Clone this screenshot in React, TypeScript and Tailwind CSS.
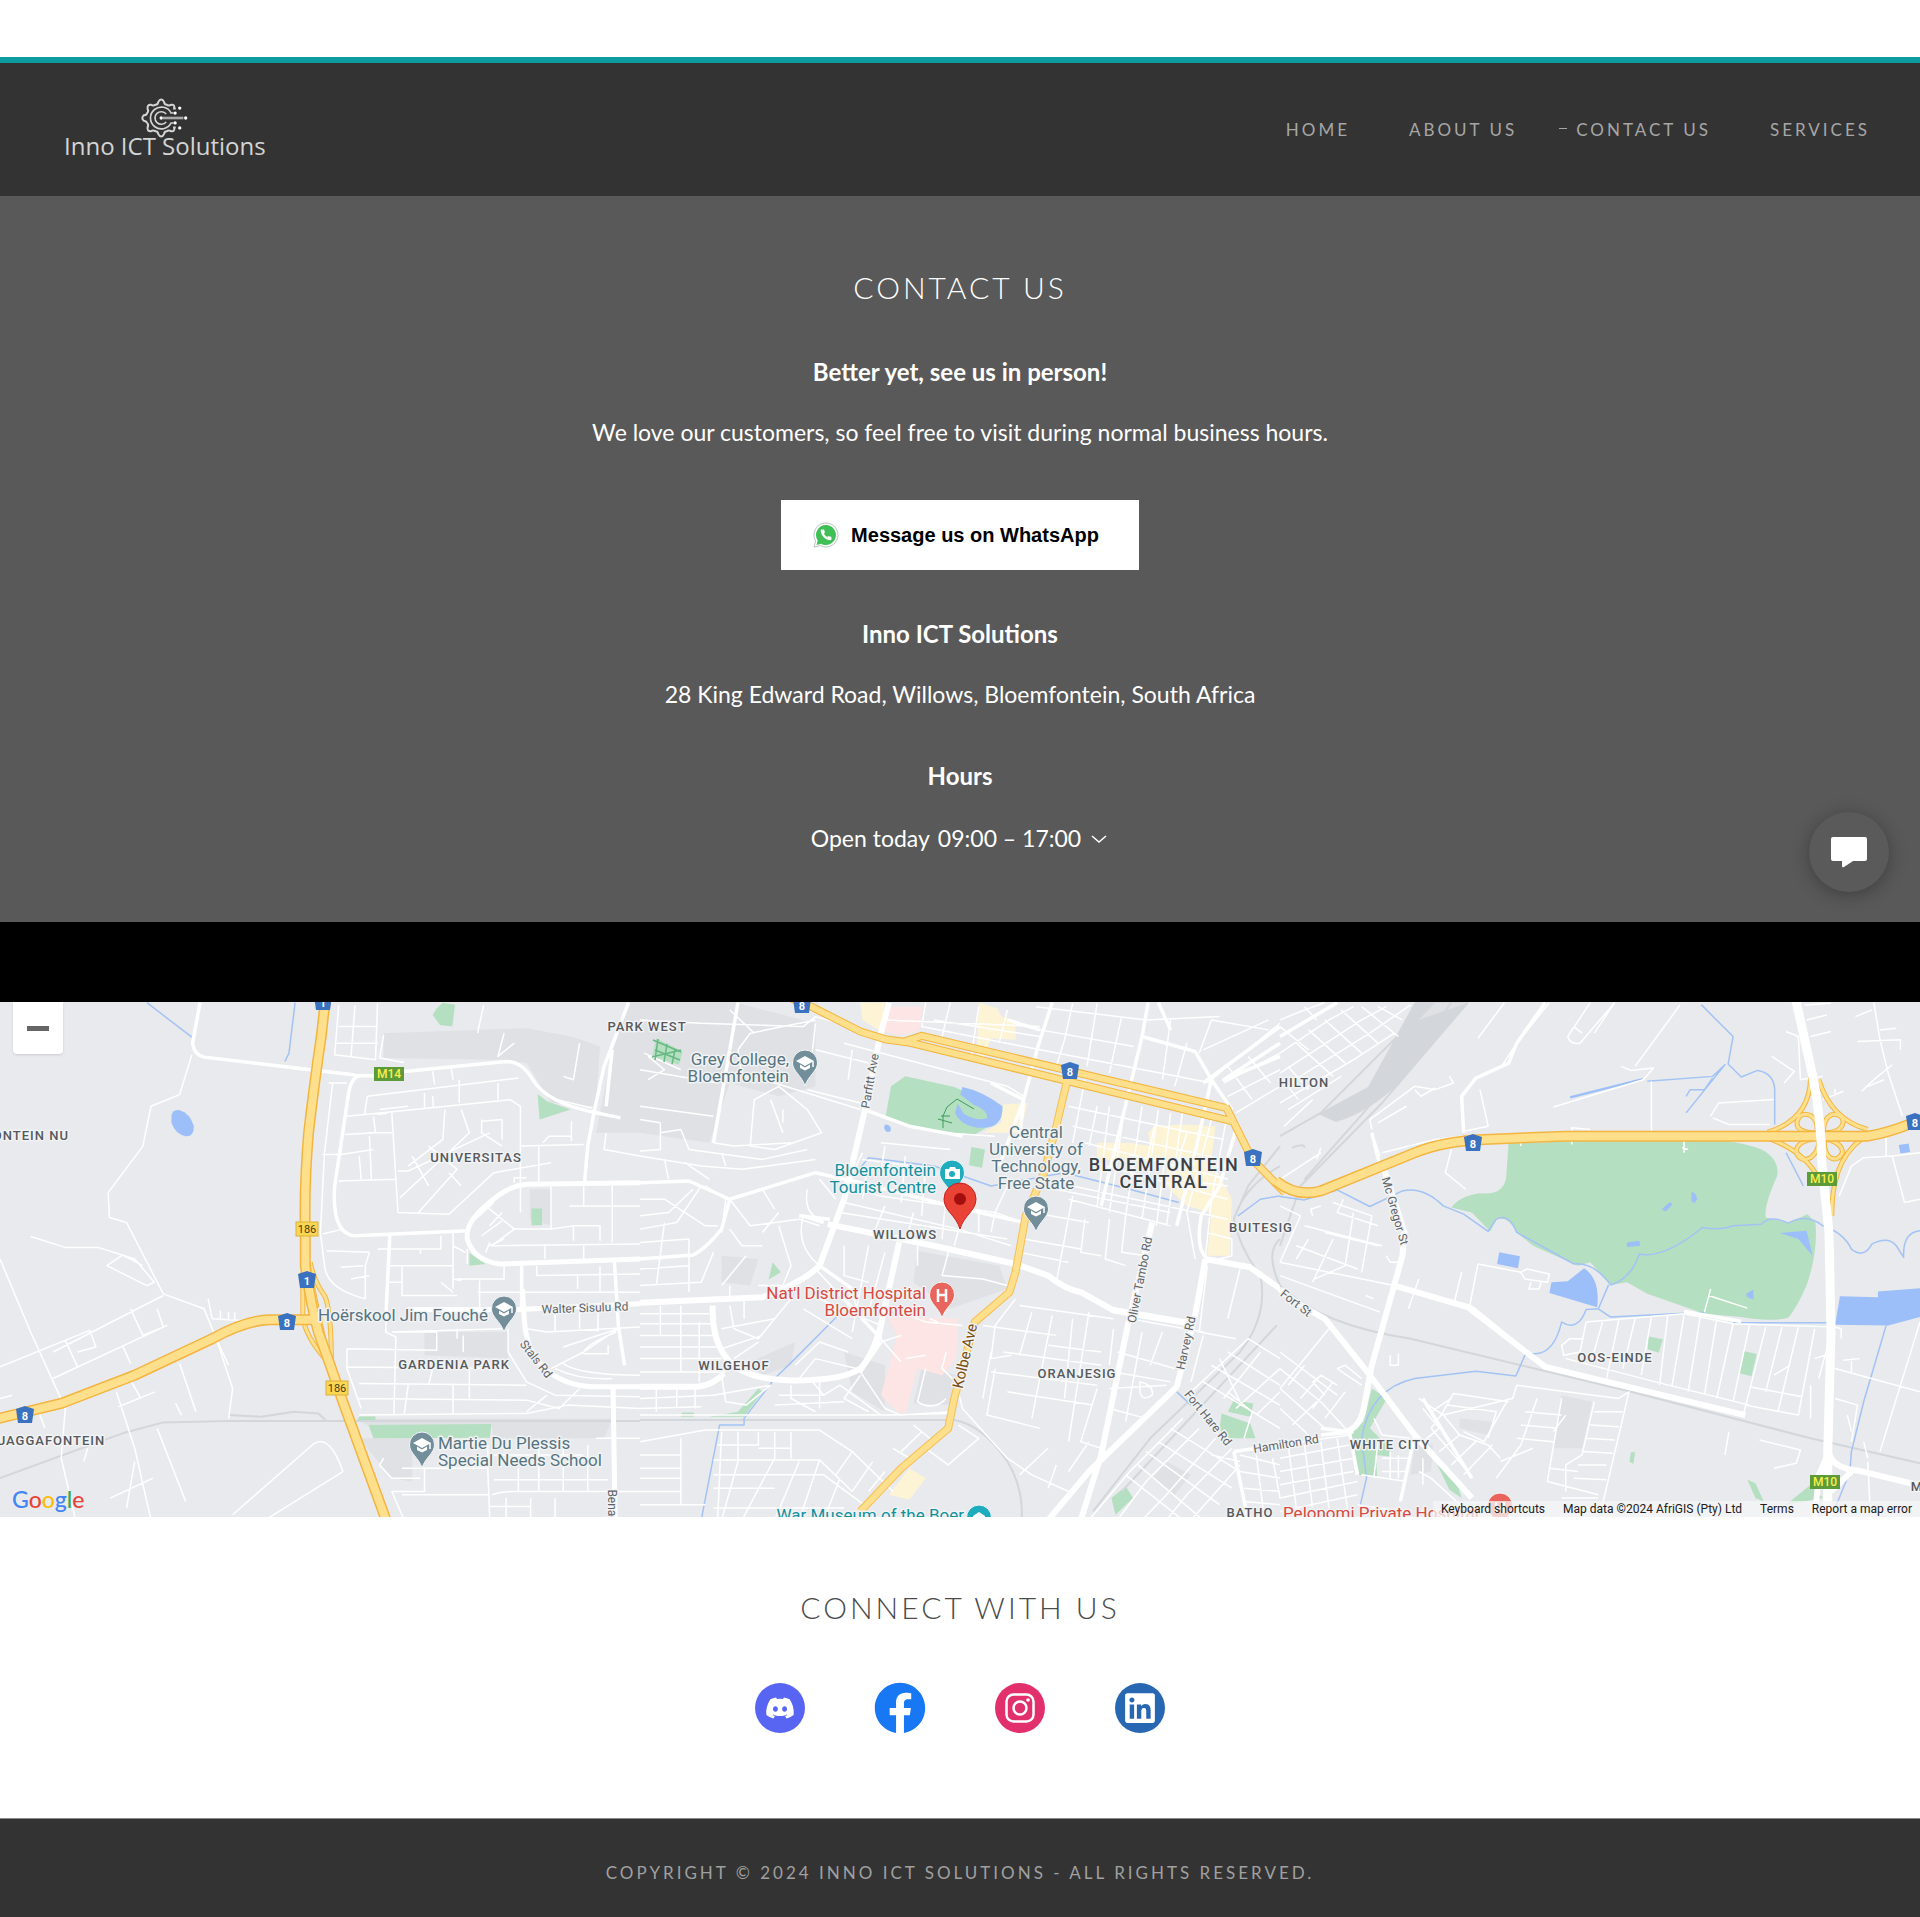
import React from "react";
import { FaDiscord, FaFacebook, FaLinkedin } from "react-icons/fa";

/* ---------- Map data: three tiles, each drawn on a 1568 x 1566 grid ---------- */

type Tile = {
  x: number;
  campus: string;
  park: string;
  water: string;
  stream: string;
  pink?: string;
  sand?: string;
  rail: string;
  minor: string;
  medium: string;
  major: string;
  highway: string;
  arterial?: string;
  ramp?: string;
};

const WEST: Tile = {
  x: 0,
  campus:
    "M940,100L1290,85L1400,110L1470,140L1460,320L1350,310L1290,190L1230,180L940,175Z M1570,0V400L1460,400L1500,160L1540,0Z M1298,570H1352V680L1298,660Z M1040,1000H1245V1080L1040,1070Z M870,1260H1500L1480,1320H1210L1205,1280H900Z M880,1320H1010V1450L960,1440Z",
  park:
    "M1070,25L1085,8L1115,14L1108,80L1078,75L1060,45Z M1317,283L1340,305L1398,330L1322,360Z M1302,628H1328V678H1302Z M1150,800V762L1190,795Z M903,1280L1204,1277L1200,1318L915,1320Z M880,1254H920V1266H876Z",
  water:
    "M420,350Q422,328 440,332Q465,340 475,380Q475,412 455,410Q430,405 420,370Z",
  stream: "M360,8L470,112 M723,8L708,160L698,185",
  rail:
    "M0,1440L300,1305L400,1272L560,1268H1568 M560,1250L640,1255L720,1240L780,1245L800,1268",
  minor:
    "M470,165L440,285L370,320L350,440L265,580L268,655L310,670L400,885L500,930L530,1020L570,1170L560,1260 M75,712L160,745H240L330,780L378,850L360,860L262,800L300,768L350,800 M0,780L75,1000L160,1230L150,1380L185,1566 M0,1105L220,995L235,1045L190,1060 M130,1140L400,985L385,930 M130,1060L400,890 M320,930L350,1010L410,980 M160,1025L190,1105L130,1140 M300,1040L320,1095 M440,1095L480,1240 M285,1180L330,1350L370,1566 M290,1225L380,1180 M320,1145L345,1200 M385,1290L455,1510 M270,1500L375,1440 M330,1390L310,1530 M215,1350L205,1390 M570,1550L770,1335Q810,1310 840,1420L650,1566 M510,900L520,960L590,965 M540,935V960M560,940V965M575,940V965 M530,1020L560,1100 M0,1200L30,1190 M95,1240L110,1290 M430,1215L445,1250 " +
    "M830,15L820,165L920,180L925,10 M830,80H925 M825,130H925 M870,15L860,170 M940,105L930,175L990,188 M1185,15L1170,100 M1110,240L1105,200 M1235,100L1220,170L1260,130 M1420,130L1405,240L1380,230 M1060,215L1065,255 M1060,290L1062,325 " +
    "M900,290L1270,235 M900,290L893,345L850,350 M895,345L1250,300L1275,320L1275,640 M1000,320L930,330 M925,345L950,340 M960,340L975,640L1100,645L1210,520L1350,490 M915,350L920,400L845,405 M835,465L915,450 M830,545L970,540 M905,410L910,540 M880,470L885,540 M960,400H900 M1040,280V325 M1125,240V310 M1130,330L1150,400L1090,470L980,595 M1090,330L1085,420L1000,500 M975,515H1000L1200,400 M1180,360V400L1230,440 M1180,365L1230,360V420 M1050,440L1120,510L1025,640 M1010,470L1050,560 M1275,440L1430,435 M1320,440V550 M1100,520L1130,560 M1220,250V300 " +
    "M815,250L795,460L785,700L795,800Q800,870 895,900V800L905,760L800,755 M805,250H850 M790,465H830 M790,705L840,690 M835,805L890,800 M860,840L905,830 M955,710L945,1000L970,1015L965,1250 M925,750H1080V710 M950,800H1110V870 M950,850H985 M985,800V890L1120,890 M1110,700V840L1130,845 M1080,850L1110,880 M1145,750V795 M1030,750V765 M1175,845V935 M1110,740L1140,760 " +
    "M1190,620L1260,690L1205,740L1568,735 M1350,560V690L1405,680V725 M1400,680H1470V725 M1260,690H1350 M1230,640L1200,680 M1210,610L1165,660 M1230,665L1180,710 M1395,620H1568 M1430,560V620 M1500,560V730 M1470,800V880 M1315,800V830L1568,825 M1415,830V870 M1190,760L1200,730 M1235,795V840H1120V845 M1170,880H1568 M1200,740L1235,720 M1335,735V780 M1430,735V780 M1260,550V535H1290 M1330,430L1345,410H1400 M1400,365V425 M1365,300L1450,325 M1485,400L1480,450L1568,470 " +
    "M1245,990V1060L1290,1150L1360,1190L1568,1195 M960,1000L1235,990 M850,1050L1070,1055V1000H970 M850,1050V1110L885,1230 M850,1105L1245,1110 M880,1155L1290,1160 M875,1200L1290,1205 M1060,1110L1050,1160 M1150,1110V1200 M1110,1155V1250 M880,1250L1290,1245L1390,1220L1568,1230 M1000,1160L990,1250 M1290,1205L1370,1230L1420,1170 M1340,1190L1290,1240 M1515,990L1430,1060L1350,1110 M1515,990L1380,1045 M1510,1000Q1430,1040 1430,1065H1490V1040 M1380,1095Q1420,1130 1568,1130 M1360,1110Q1420,1145 1500,1140 M1290,990L1340,1000L1568,985 M1360,935V1000M1420,935V990M1465,940V1000 M1120,990V1020 M1135,1010V1060 " +
    "M985,1410H1195V1340 M1040,1410V1480L960,1480L990,1566 M985,1490H1200 M1195,1410L1200,1566M1205,1490Q1230,1480 1260,1480H1568 M1270,1410V1480M1320,1320V1480M1380,1330V1480M1440,1340V1480M1210,1370H1430M1210,1445H1490 M1240,1500V1566M1300,1500V1566 M1360,1500V1566 M1460,1320H1568 M1200,1525H1300 M940,1380L930,1400L960,1440 M960,1440H1030",
  medium:
    "M490,8L472,130Q475,165 500,172L760,210L870,226 M870,228L915,228 M990,215L1240,185Q1280,185 1305,240Q1340,310 1455,338L1520,355 M1540,8L1480,200L1455,340L1440,440L1432,550 M880,228Q858,235 853,290L820,560Q812,705 870,710L1145,695 M955,710L945,960 M1505,780L1515,980L1530,1100 M1485,320L1500,150 M1278,800V930",
  major:
    "M1568,550L1290,555Q1240,560 1190,620Q1140,670 1145,720Q1160,785 1225,795L1568,780 M1280,870L1285,970Q1290,1060 1340,1115Q1390,1165 1460,1165H1568 M1000,932H1270L1568,915 M1502,1165L1507,1566",
  highway:
    "M797,0L787,110Q770,250 756,400Q745,560 748,700V800Q762,920 780,1000L812,1110L840,1210L950,1580 M-10,1262L150,1215L330,1130L520,1020Q600,965 660,963H790",
  ramp: "M760,790Q770,850 795,890Q812,930 812,1100 M742,820L742,960Q752,1020 800,1085 M765,860L800,1060",
};

const CENTRAL: Tile = {
  x: 640,
  campus:
    "M-2,0H210L430,70V180L430,260L340,290L220,250L170,430L-2,400Z M680,755L880,800L900,870L760,930L670,850Z M200,770L290,780L270,860L200,850Z M380,1030L270,1090L300,1130L370,1100Z M690,1110L780,1130L760,1220L670,1215Z M1290,1390L1350,1430L1310,1490L1255,1440Z M500,1060L600,1100V1240L520,1180Z",
  park:
    "M650,230L770,262L840,300L870,370L820,405L680,390L602,350L615,260Z M812,443L845,450L838,505L806,498Z M325,790L345,820L315,842Z M290,1170L300,1180L255,1255H170L240,1240Z M103,1242H132V1255H100Z M1455,1205L1503,1215L1495,1255L1440,1240Z M1425,1245L1495,1275L1508,1320L1430,1320L1420,1290Z M1190,1465L1208,1500L1165,1550L1155,1500Z M40,115L105,155L95,195L30,170Z",
  water:
    "M790,262Q840,275 888,320Q890,385 840,385Q790,385 772,340Z M600,375Q618,375 614,395Q602,403 598,385Z",
  stream:
    "M530,520L560,475L720,500L860,560L1040,520L1200,570L1320,610 M485,950L380,1080L330,1140L255,1260V1280H195L150,1566 M1465,650L1520,600L1568,590 M1315,1180L1350,1220",
  pink:
    "M605,20H690L685,90L640,108L598,95Z M605,950L780,960L775,1080L740,1130L680,1110L650,1245L630,1240L590,1190L630,1010Z",
  sand:
    "M540,8H600L590,95L545,60Z M830,8L875,25L885,50L920,60V120L860,115L840,180L825,170Z M1120,430L1200,430L1250,440L1245,400L1260,380L1330,375L1410,380L1400,480L1450,600L1445,770L1390,770L1400,640L1340,620L1290,560L1290,490L1120,480Z M890,315L950,310L930,400L840,400L885,370Z M660,1410L700,1440L660,1505L610,1490Z",
  rail:
    "M0,1265H770Q840,1280 900,1390Q940,1470 935,1566 M1568,500Q1480,560 1455,660Q1470,750 1520,830Q1540,950 1470,1060L1250,1320L1110,1540 M1568,440L1490,560L1455,660 M1568,860Q1530,760 1568,720 M1180,1480L1560,980",
  minor:
    "M0,60L150,70L400,80L430,50L545,90 M240,150L270,100L430,60 M240,150L250,230L330,250L540,330 M220,30L280,100 M430,70L420,180 M430,150L560,190 M410,270L540,310 M280,300L340,260L410,330L445,400L330,450L270,440Z M320,300L350,400 M50,370L0,360 M180,430L230,440L370,430 M50,370V450L0,455 M50,400L100,390L120,450L300,480L410,450 M0,470L150,500L250,510L430,480 M60,480L70,540 M110,490L170,540 M500,130L560,150 M520,150L510,240 M200,460L210,500 M350,330V370 M0,210L190,250 M20,170L60,210L20,240 M10,160L100,210 M0,320L180,350 " +
    "M700,8L690,80L980,150L1400,250 M760,8L740,110 M830,20L810,180 M900,30L880,130 M720,60L980,110 M560,150L900,260L940,290 M600,60L980,80 M1060,10L1040,120L1020,200 M1120,10L1095,200 M1180,50L1150,220 M970,20L1240,60 M980,90L1210,140 M1300,60L1280,240 M1340,130L1310,260 M1240,60L1420,50 M1370,160L1400,60L1540,90 M1430,250L1568,160 M1440,290L1568,210 M1460,340L1568,260 M1400,240L1568,70 M1440,200L1500,300 M1490,170L1545,250 M1380,150L1540,60 " +
    "M1090,240L1060,430 M1120,320L1100,440 M1150,320L1120,620 M1190,300L1150,640 M1230,320L1190,650 M1270,330L1230,660 M1300,340L1265,680 M1330,330L1290,680 M1400,360L1340,640L1360,780 M1435,370L1400,600L1385,780 M1050,320L1430,420 M1060,380L1430,480 M1090,430L1440,540 M1110,490L1440,600 M1060,560L1440,660 M1050,600L1300,680 M1390,700L1450,720V770L1390,790 M1310,540L1440,560 M1340,400L1300,560 M1260,380L1240,500 " +
    "M530,520L500,560L590,590L870,640L940,670 M500,610L780,690L910,740 M490,640L900,720 M545,480L670,500 M590,430L760,450 M600,440L590,520 M650,470L640,610 M700,500L690,650 M750,590L740,720 M790,650L770,740 M830,630V700 M870,640L860,700 M900,560L870,640 M600,620L570,710 M670,640L655,710 M555,520L545,600 M740,400L870,410 M545,460L530,500 M980,560L1300,640 M1060,590L1020,850 M1090,660L1080,760L1130,770 M1150,660L1140,780L1190,800 M1190,650L1180,760L1240,770 M960,640L1100,670 M940,720L1080,750 M930,760L1050,790 M760,740L740,830L840,840L900,860 M680,740V800 M560,740L520,1000 M600,760L560,940 M500,740V830L560,850 " +
    "M0,600L60,600L160,680L190,680 M160,560L210,600L200,700 M0,690L90,670L150,560 M0,650L70,640L130,570 M0,730L120,720 M220,600L270,680L390,660L440,680 M300,570L330,630 M220,690L250,740L300,740 M340,680L370,800L350,860L290,860 M400,650Q380,740 440,800 M410,570Q400,640 440,660 M260,770L200,860 M180,760L150,850L0,860 M0,810L120,800 M120,720V880 M60,670L40,860 M430,810L590,1020L640,1090 M440,540L480,600 M220,860V900 M340,640L300,700 " +
    "M0,945H170 M0,975H175 M0,1010H180 M0,1045H190 M0,1080H200 M0,1120H210 M50,920V1010 M100,920V1120 M145,970V1150 M220,920L230,990L290,1020L330,960 M200,990L330,960 M200,1050L300,1010 M230,1080L290,1030 M255,960V900 M370,900L330,960 M420,890L590,980 M510,860L530,920 M400,930L520,1020 M380,1100L440,1030L510,1060 M430,1080L530,1110 M390,1140L430,1080 M600,940L590,1020L540,1110 M640,940L700,970L790,980 M650,1080L700,1070 M730,970L710,960 M750,1060L740,1110L765,1140 M590,1030L640,1010 M700,1110L680,1210Q720,1240 750,1200 M540,1120L600,1230L640,1250L760,1240 " +
    "M0,1200L180,1190L320,1160 M0,1230L150,1225 M40,1170V1240 M90,1165V1230 M135,1165V1230 M200,1130L210,1210L260,1220L320,1160 M370,1160V1200L430,1240 M340,1190H450L490,1160 M330,1220L500,1210 M420,1145L450,1190 M490,1160L590,1250 M0,1250H600L760,1245 M440,1150V1230 M540,1130L500,1200L560,1240 M0,1330L160,1295H440L520,1360L620,1480 M0,1370H100V1440H0 M0,1410H100 M0,1480H100 M0,1520H160 M100,1320V1520 M190,1340H290V1300 M200,1300L190,1566 M180,1385H440L520,1480 M240,1300V1390L200,1566 M330,1300V1380L250,1566 M370,1300V1380 M290,1350H370 M180,1430H450L560,1530 M180,1470H330 M390,1390L330,1566 M440,1385L390,1566 M490,1440L450,1566 M520,1360L480,1430 M570,1390L520,1480 M600,1420L560,1480 M180,1530H500 " +
    "M670,1280L720,1330 M640,1360L690,1300 M700,1350L755,1400L830,1320L780,1280 M780,1180L790,1230L900,1380L960,1430L1050,1480 M660,1380L620,1350 M930,1430L1000,1350 M1000,1470L1020,1400 M1100,1330L1050,1420 M860,1060L840,1200 M870,980L860,1080L910,1070 M920,900L870,980 M930,920L1160,960 M960,940L930,1070 M1010,950L960,1260 M1060,960L1040,1200 M1100,940L1050,1330 M860,1120L1120,1160 M890,1060L1130,1100 M900,1180L1110,1220 M1000,1040L1130,1060 M840,980L1020,1010 M870,1110L850,1250L980,1290 M1120,1170L1080,1330L1130,1350 M1160,990L1150,1100 " +
    "M1200,960L1380,1000 M1170,1060L1310,1110 M1160,1120L1300,1150 M1150,1170L1290,1160 M1230,1000L1190,1270 M1280,1000L1250,1100 M1225,1150Q1260,1160 1255,1190Q1230,1210 1225,1180Z M1150,1230L1240,1260 M1380,1010L1350,1150 M1390,800L1370,1000L1460,1020 M1470,810L1440,960 M1350,1180L1490,1020L1568,1080 M1380,1150L1568,1290 M1400,1100L1568,1220 M1440,1060L1568,1160 M1430,1200L1520,1060 M1460,1230L1568,1110 M1510,1250L1568,1180 M1440,1180L1500,1240L1480,1320 M1420,1080L1470,1210 " +
    "M1330,1260L1200,1420L1100,1566 M1370,1290L1240,1450L1170,1566 M1410,1320L1290,1490L1230,1566 M1450,1350L1340,1490L1290,1566 M1470,1400L1350,1566 M1300,1290L1470,1420 M1270,1330L1450,1470 M1240,1360L1420,1520 M1220,1400L1380,1566 M1190,1430L1330,1566 M1470,1370L1568,1400 M1470,1420L1568,1440 M1480,1470L1568,1480 M1480,1510L1568,1520 M1510,1370L1530,1566 M1550,1380L1568,1500 M1400,1370L1470,1390",
  medium:
    "M240,8L180,430 M1010,8L975,140L940,300L880,500 M1245,8L1230,110L1360,155L1400,240 M1230,110L1195,290 M1270,8L1300,90 M1400,240L1360,460L1315,680 M1465,370L1420,560L1375,650Q1360,750 1390,780 M1568,170L1430,240L1568,130 M860,250L940,300L930,420 M550,330L660,380L790,410 M0,550L120,545L220,600L430,520L540,550L760,620L940,670 M0,780L130,768Q160,750 200,690L220,600 M450,670L400,650 M440,800L520,870 M590,1020L500,900 M1400,240L1450,330 M1160,930L1350,970 M1195,290L1130,620 M590,1030L540,1120 M1455,1360L1568,1340 M1455,1360L1490,1566 M900,60L980,90 M465,660L390,650 M1568,80L1380,250",
  major:
    "M610,8L588,110L555,310L500,600L440,800Q400,850 300,895L0,912 M460,675L720,740L920,795L1000,830Q1040,870 1080,880L1160,935L1350,975 M635,730L590,980Q570,1070 540,1110Q490,1150 360,1145Q260,1140 220,1090Q175,1030 178,920 M0,1165H140Q180,1160 205,1125 M1255,670L1195,980L1130,1370L1080,1566 M1385,780L1360,950L1315,1165L1100,1420L1000,1566 M1385,780L1495,805L1568,870",
  highway: "M360,-10L420,20L540,95L600,118L660,128L1450,365 M640,128L690,108L1435,325 M1435,320L1500,480L1580,580",
  arterial: "M1045,250L1020,380L990,520L945,650L920,820L905,880L820,970L770,1200L755,1290L640,1410L540,1540",
};

const EAST: Tile = {
  x: 1280,
  campus:
    "M690,1190L765,1210L740,1350L670,1350Z M330,1330L375,1340L370,1420L320,1430Z M440,1260L520,1270L510,1310L440,1290Z M340,60L460,8H380Z",
  park:
    "M560,432L980,415Q1100,415 1180,450Q1225,480 1218,530Q1185,620 1190,655L1245,672L1292,645L1312,670Q1318,760 1290,860Q1265,930 1245,957Q1200,970 1130,955L1040,945L900,885L850,850L810,858L760,790L730,800L620,740L580,700Q560,650 530,660L515,697L470,640L420,625Q440,590 490,582Q555,590 555,520Z M903,1013L938,1022L928,1062L901,1052Z M1138,1058L1168,1066L1155,1133L1126,1124Z M225,1170L262,1200L220,1290L270,1350V1375L235,1370L238,1435L190,1430L168,1300L205,1270Z M380,1385L430,1440L445,1500L415,1475Z M860,1362H870L866,1397L856,1390Z M1145,1445L1165,1455L1185,1510L1165,1500Z M1300,1460L1330,1500L1240,1520Z",
  water:
    "M1372,892L1465,895V878L1568,868V955L1490,980L1360,978Z M745,808Q785,840 777,925L660,882L665,850L705,847Z M537,760L588,772L583,808L532,795Z M1225,702L1290,695L1305,770L1270,720Z M850,730L880,725L883,740L850,744Z M935,630L955,608L962,615L945,637Z M1008,580Q1018,575 1022,600L1015,612L1008,605Z M1142,885L1160,872V902L1145,895Z M1516,437L1540,432L1544,458L1520,462Z M710,290L888,235V242L712,297Z",
  stream:
    "M0,592L60,602L140,572L220,622L300,575Q350,560 400,620L450,645L510,697L530,660Q560,640 580,700L720,795Q770,790 810,858Q860,840 880,765Q940,780 1035,685Q1080,695 1110,680L1180,675Q1200,645 1245,672Q1290,640 1330,680Q1380,700 1400,750Q1430,780 1450,735Q1490,710 1510,740L1528,775Q1525,700 1568,695 M805,858L780,930L810,955L1040,940 M1110,972H1360 M780,930L750,932Q730,1000 690,970Q670,1070 620,1065L600,1070L578,1132L480,1118L330,1140Q220,1170 200,1320L212,1440L195,1530 M1032,14L1110,110L1098,193L1130,232L1170,212Q1210,220 1212,270V375 M900,245L1060,230L1090,195L995,340 M1060,235L1040,270H1005L995,290 M1240,460L1282,560 M1485,980L1430,1210L1400,1360L1395,1440 M1360,1530L1390,1440",
  rail:
    "M0,410L100,340L370,8 M0,740L50,560L250,310L460,8 M0,860Q100,980 320,1020L860,1180L1300,1320L1568,1395 M60,540L240,290L420,8 M30,445Q60,430 60,445",
  minor:
    "M0,60L60,30L110,8 M0,160L120,60L180,20 M0,220L200,60L260,20 M10,260L220,100L320,15 M0,310L180,180L280,100 M20,330L150,230 M110,60L200,160 M150,30L240,130 M70,90L160,190 M40,130L130,230 M200,20L290,110 M0,80L70,150 M20,200L70,270 M0,230L45,300 M240,20L300,60 M10,380L80,300 M60,20L90,60 " +
    "M550,8L485,115 M660,8L580,130L540,205 M760,8L705,110Q710,135 735,130L770,80L820,8 M980,15L870,200 M835,200L860,212L915,205L890,240L670,322 M910,245V395 M720,80L740,100 M820,8L770,100 M1285,15L1350,10 M1290,60L1340,45 M1300,110L1350,95 M1240,95L1270,110L1275,240 M1205,170L1260,215L1235,250 M1275,240L1330,230 M1055,350L1075,310L1210,300 M1060,355L1100,375H1200 M1330,300L1380,275 M1360,268V290 M1410,50L1450,30 M1415,125L1520,120V150 M1455,8L1470,120L1490,220L1525,350 M1425,275L1455,240L1500,195 M1440,260L1480,240 M1470,90L1510,85 " +
    "M225,390L220,360L330,260L380,270L425,250L415,230 M330,270L345,290L380,265 M240,370L310,320 M245,470L225,400 M250,460L380,420L445,410 M420,450L405,520L455,570 M450,395L510,380L490,270 M590,420V440 M715,435V385L760,390 M990,420V460M985,445L1000,450 M50,500L100,460 M0,540L50,500 M90,480L100,445 " +
    "M0,620L50,650L0,790 M130,610L225,650L200,820 M155,600L140,640L240,680 M180,640L160,800L85,840 M100,620L75,630L80,650 M60,680L250,740 M70,720L40,780 M0,790L280,860 M40,740L190,810 M110,700L240,740 M130,720L80,850 M260,770L270,790H300 M0,830L245,940 M210,890L230,900 M340,840L315,930 M445,820L425,920 M485,795L465,920 M485,795L590,820 M590,820L605,810L660,825L655,850L600,840Z M615,850L610,870L635,870L640,850 " +
    "M750,970L735,1060L695,1070L690,1040L710,1020H740 M750,970L990,945L1110,975L1360,985L1375,990V1020 M790,970L765,1080 M830,965L800,1140 M870,960L840,1110 M910,955L885,1130 M950,950L930,1160 M990,950L960,1165 M1030,950L1000,1180 M1070,960L1040,1190 M1110,975L1070,1200 M1150,980L1110,1210 M1190,985L1135,1250 M1230,985L1190,1180 M1270,985L1220,1240 M1310,990L1270,1250L1140,1220 M700,1080L920,1150L1150,1220 M1150,1165L1280,1195 M1300,1160V1260 M1340,1050L1320,1140 M1055,870L1040,940 M1050,890L1145,928 M1210,1130L1250,1100 " +
    "M580,1160L830,1200L855,1180L790,1520 M580,1160L570,1200L400,1250 M425,1185L395,1250L370,1290 M425,1185L560,1210 M410,1220L530,1240L510,1320 M560,1200L500,1330L450,1300 M630,1200L590,1340L530,1440 M690,1200L655,1450L780,1490 M770,1210L740,1370L700,1400V1480 M600,1240L690,1250 M590,1280L680,1290 M580,1320L670,1330 M770,1240H840 M760,1280L830,1285 M750,1320L820,1325 M740,1360L815,1365 M730,1400H800 M720,1440L800,1445 M660,1410L730,1420 M400,1250L440,1310L510,1340L540,1380 M370,1290L460,1420 M440,1310L390,1360 M480,1330L420,1400 M520,1340L450,1430 M350,1230L390,1290L350,1330 M340,1200L400,1250 M700,1250L670,1300 M420,1200L370,1240 M690,1500H780 M540,1390L620,1350 " +
    "M0,1110L100,1210L160,1290 M0,1060L140,1190 M0,1170L110,1290 M0,1230L70,1310 M120,990L0,1170 M20,1160L60,1100 M50,1200L100,1130 M80,1230L130,1150 M110,1260L160,1180 M140,1110L200,1160 M140,1110L160,1100L200,1140 M110,1190L80,1150L100,1130L140,1160 M30,1280L90,1210 M0,1340L170,1310 M0,1380L170,1340 M0,1420L180,1380 M0,1460L180,1420 M0,1500L190,1450 M0,1540L190,1490 M20,1340L40,1530 M60,1340L80,1530 M100,1330L120,1530 M140,1320L165,1530 M200,1430L310,1450 M240,1330L230,1440 M250,1380H320 M250,1420H310 M270,1360V1440 M290,1370V1440 M190,1520L300,1540 M230,1260L250,1310L320,1320 M340,1420L370,1440L450,1530 M350,1380V1460 M270,1070V1100H290V1065 " +
    "M1360,1110L1568,1180 M1400,1080V1120M1380,1085L1420,1080 M1360,1200L1415,1220L1400,1330 M1390,1250L1400,1300 M1568,970L1470,1360 M1430,1330L1440,1380 M1530,610L1500,470L1568,460 M1530,610L1568,600 M1370,590L1400,500L1430,475L1500,470 M1100,1300L1090,1370 M1175,1325L1275,1355L1265,1395L1210,1410 M1440,1390L1445,1510 M1310,1080L1360,1060 M1485,400V470",
  medium:
    "M450,400L445,290L480,235L560,190L580,130L650,8 M225,400L245,500 M280,860L470,925 M350,1200L470,1440 M0,110L140,8 M190,1430L170,1300L100,1290 M180,1300L100,1310 M330,1310L295,1510 M1350,800L1355,990 M470,925L650,1105 M990,938L1130,968",
  major:
    "M255,510L305,700L300,770L225,1100L205,1230Q195,1290 160,1300 M0,870Q20,900 110,960L220,1130L330,1310L470,1500 M280,860L460,925L650,1105L1140,1250 M1345,1360L1320,1430L1310,1566 M1345,1360Q1350,1410 1420,1418L1568,1462 M1400,1420L1350,1480",
  highway: "M-10,545Q40,595 100,575L330,460Q400,425 500,420L700,410H1440Q1490,400 1540,375L1580,365",
  ramp:
    "M1300,230Q1300,360 1195,398 M1320,240Q1350,360 1440,390 M1200,418Q1290,460 1320,540 M1450,400Q1350,460 1352,650 M1315,400Q1262,400 1267,365Q1275,335 1300,348Q1320,365 1315,400 M1332,400Q1330,360 1350,346Q1378,340 1380,368Q1375,400 1332,400 M1318,416Q1262,425 1265,460Q1275,490 1300,475Q1325,450 1318,416 M1335,418Q1378,430 1378,460Q1365,490 1345,472Q1330,450 1335,418",
};

const M10 = "M1262,-10L1300,200Q1325,330 1328,500L1345,700L1350,1000L1342,1360V1566";

function Stroke({ d, color, width }: { d: string; color: string; width: number }) {
  return (
    <path
      d={d}
      fill="none"
      stroke={color}
      strokeWidth={width}
      strokeLinejoin="round"
      vectorEffect="non-scaling-stroke"
    />
  );
}

function MapTile({ tile }: { tile: Tile }) {
  return (
    <g transform={`matrix(0.40816 0 0 0.33206 ${tile.x} -2)`}>
      <path d={tile.campus} fill="#dfe1e5" />
      {tile.sand && <path d={tile.sand} fill="#fdf4d6" />}
      {tile.pink && <path d={tile.pink} fill="#fce5e4" />}
      <path d={tile.park} fill="#b4dfc0" />
      <path d={tile.water} fill="#9cbff9" />
      <Stroke d={tile.rail} color="#d3d6da" width={2} />
      <Stroke d={tile.stream} color="#a3c3f5" width={1.5} />
      <Stroke d={tile.minor} color="#ffffff" width={1.5} />
      <Stroke d={tile.medium} color="#ffffff" width={3.5} />
      <Stroke d={tile.major} color="#ffffff" width={tile.x === 0 ? 5 : 6} />
    </g>
  );
}

function Highways({ tile }: { tile: Tile }) {
  return (
    <g transform={`matrix(0.40816 0 0 0.33206 ${tile.x} -2)`}>
      {tile.ramp && <Stroke d={tile.ramp} color="#f3b53f" width={5} />}
      {tile.ramp && <Stroke d={tile.ramp} color="#fedf8c" width={3} />}
      <Stroke d={tile.highway} color="#f3b53f" width={tile.x === 640 ? 8 : 11} />
      {tile.arterial && <Stroke d={tile.arterial} color="#f6bf55" width={8} />}
      {tile.arterial && <Stroke d={tile.arterial} color="#fedf8c" width={6} />}
      <Stroke d={tile.highway} color="#fedf8c" width={tile.x === 640 ? 6 : 8} />
    </g>
  );
}

/* [text, centre x, centre y] */
const DISTRICTS: [string, number, number][] = [
  ["PARK WEST", 647, 25],
  ["UNIVERSITAS", 476, 156],
  ["GARDENIA PARK", 454, 363],
  ["WILLOWS", 905, 233],
  ["HILTON", 1304, 81],
  ["BUITESIG", 1261, 226],
  ["ORANJESIG", 1077, 372],
  ["WILGEHOF", 734, 364],
  ["OOS-EINDE", 1615, 356],
  ["WHITE CITY", 1390, 443],
  ["BATHO", 1250, 511],
  ["BLOEMFONTEIN NU", 3, 134],
  ["QUAGGAFONTEIN", 46, 439],
  ["MAGERSFONTEIN", 1970, 485],
];

/* [text, centre x, centre y, angle] */
const STREETS: [string, number, number, number][] = [
  ["Walter Sisulu Rd", 585, 306, -2],
  ["Stals Rd", 536, 357, 52],
  ["Benade Rd", 612, 516, 90],
  ["Parfitt Ave", 870, 79, -80],
  ["Oliver Tambo Rd", 1140, 278, -79],
  ["Harvey Rd", 1186, 341, -78],
  ["Fort Hare Rd", 1208, 416, 51],
  ["Hamilton Rd", 1286, 442, -9],
  ["Fort St", 1296, 301, 38],
  ["Mc Gregor St", 1395, 209, 74],
];

type Anchor = "start" | "middle" | "end";

/* [lines, x, first baseline, anchor, colour] */
const PLACES: [string[], number, number, Anchor, string][] = [
  [["Grey College,", "Bloemfontein"], 789, 63, "end", "#587380"],
  [["Hoërskool Jim Fouché"], 488, 319, "end", "#587380"],
  [["Martie Du Plessis", "Special Needs School"], 438, 447, "start", "#587380"],
  [["Central", "University of", "Technology,", "Free State"], 1036, 136, "middle", "#587380"],
  [["Bloemfontein", "Tourist Centre"], 936, 174, "end", "#12919f"],
  [["Nat'l District Hospital", "Bloemfontein"], 926, 297, "end", "#d84a40"],
  [["War Museum of the Boer"], 964, 519, "end", "#12919f"],
  [["Pelonomi Private Hospital"], 1283, 517, "start", "#d84a40"],
];

const SHIELDS: [string, number, number][] = [
  ["1", 307, 278],
  ["1", 323, 0],
  ["8", 287, 320],
  ["8", 25, 413],
  ["8", 802, 3],
  ["8", 1070, 69],
  ["8", 1253, 156],
  ["8", 1473, 141],
  ["8", 1915, 120],
];

function Pin({ x, y, color, children }: { x: number; y: number; color: string; children?: React.ReactNode }) {
  return (
    <g transform={`translate(${x} ${y})`}>
      <path
        d="M0,-13A12.5,12.5 0 0 1 12.5,0C12.5,8 3,13 0,23C-3,13 -12.5,8 -12.5,0A12.5,12.5 0 0 1 0,-13Z"
        fill={color}
        stroke="#f4f6f8"
        strokeWidth="1"
      />
      {children}
    </g>
  );
}

function SchoolPin({ x, y }: { x: number; y: number }) {
  return (
    <Pin x={x} y={y} color="#728e9a">
      <path d="M0,-7L9,-2L0,3L-9,-2Z M-5,1.5V5L0,7.5L5,5V1.5L0,4.5Z" fill="#fff" />
      <path d="M8,-2V4" stroke="#fff" strokeWidth="1.5" />
    </Pin>
  );
}

function MapDrawing() {
  return (
    <svg
      className="block h-full w-full"
      viewBox="0 0 1920 515"
      preserveAspectRatio="xMidYMid slice"
      fontFamily="Roboto, sans-serif"
      role="img"
      aria-label="Map of Bloemfontein"
    >
      <rect width="1920" height="515" fill="#e8eaed" />
      <path d="M1318,112L1368,85L1415,0H1468L1400,80Q1370,110 1336,120Z" fill="#d3d7db" />
      {[WEST, CENTRAL, EAST].map((t) => (
        <MapTile key={t.x} tile={t} />
      ))}
      {[WEST, CENTRAL, EAST].map((t) => (
        <Highways key={t.x} tile={t} />
      ))}
      <g transform="matrix(0.40816 0 0 0.33206 1280 -2)">
        <Stroke d={M10} color="#ffffff" width={9} />
      </g>
      <path d="M957,90L974,103Q988,108 987,116Q978,120 964,112L956,99Z" fill="#b4dfc0" />
      <path d="M943,126V114L947,105L957,97L974,107M938,117L952,121M941,114H950" fill="none" stroke="#3f9d5f" strokeWidth="1" />
      <path d="M653,38L681,50M655,48L680,58M658,37L655,58M667,42L664,60M675,48L672,62M652,55L681,48" stroke="#67b883" strokeWidth="1.5" />

      {SHIELDS.map(([n, x, y], i) => (
        <g key={i} transform={`translate(${x} ${y})`}>
          <path d="M0,-9L9,-6L7,8H-7L-9,-6Z" fill="#3b72c0" />
          <text y="5" textAnchor="middle" fontSize="11" fontWeight="700" fill="#fff">{n}</text>
        </g>
      ))}
      {[[307, 227], [337, 386]].map(([x, y]) => (
        <g key={x} transform={`translate(${x} ${y})`}>
          <rect x="-11" y="-7" width="22" height="14" fill="#fbd653" stroke="#d9b23a" />
          <text y="4" textAnchor="middle" fontSize="11" fill="#4a3d10">186</text>
        </g>
      ))}
      {([["M14", 389, 72], ["M10", 1822, 177], ["M10", 1825, 480]] as [string, number, number][]).map(([n, x, y]) => (
        <g key={y} transform={`translate(${x} ${y})`}>
          <rect x="-15" y="-7" width="30" height="14" fill="#5d9a3a" />
          <text y="4" textAnchor="middle" fontSize="12" fontWeight="500" fill="#f9f04a">{n}</text>
        </g>
      ))}

      <g stroke="#f1f3f4" strokeWidth="3" paintOrder="stroke" strokeLinejoin="round">
        {DISTRICTS.map(([t, x, y]) => (
          <text key={t} x={x} y={y + 4} textAnchor="middle" fontSize="13" fontWeight="500" letterSpacing="1" fill="#56595d">
            {t}
          </text>
        ))}
        {STREETS.map(([t, x, y, a]) => (
          <text key={t} transform={`translate(${x} ${y}) rotate(${a})`} y="4" textAnchor="middle" fontSize="12" fill="#5f6368">
            {t}
          </text>
        ))}
        <text transform="translate(965 354) rotate(-77)" y="5" textAnchor="middle" fontSize="15" fill="#7a4f13">
          Kolbe Ave
        </text>
        <g fontSize="18" fontWeight="500" letterSpacing="1.5" fill="#3c4043" textAnchor="middle">
          <text x="1164" y="169">BLOEMFONTEIN</text>
          <text x="1164" y="186">CENTRAL</text>
        </g>
        {PLACES.map(([lines, x, y, anchor, color]) =>
          lines.map((line, i) => (
            <text key={line + x} x={x} y={y + i * 17} textAnchor={anchor} fontSize="17" fill={color}>
              {line}
            </text>
          )),
        )}
      </g>

      <SchoolPin x={805} y={61} />
      <SchoolPin x={504} y={307} />
      <SchoolPin x={422} y={443} />
      <SchoolPin x={1036} y={207} />
      <Pin x={952} y={171} color="#1fadbd">
        <path d="M-7,-4H-3L-2,-6H3L4,-4H8V6H-7Z" fill="#fff" />
        <circle cy="1" r="3" fill="#1fadbd" />
      </Pin>
      <Pin x={942} y={293} color="#e8645c">
        <path d="M-4,-6V7M4,-6V7M-4,0H4" stroke="#fff" strokeWidth="2.5" />
      </Pin>
      <Pin x={979} y={516} color="#1fadbd">
        <path d="M-6,-2L0,-6L6,-2V2H-6Z" fill="#fff" />
      </Pin>
      <Pin x={1500} y={504} color="#e8645c">
        <path d="M-4,-4V7M4,-4V7M-4,2H4" stroke="#fff" strokeWidth="2.5" />
      </Pin>
      <path
        d="M960,181A16,16 0 0 1 976,197C976,209 964,213 960,227C956,213 944,209 944,197A16,16 0 0 1 960,181Z"
        fill="#ea4335"
        stroke="#c5221f"
      />
      <circle cx="960" cy="197" r="6" fill="#a50e0e" />
    </svg>
  );
}

/* ---------- Page ---------- */

function Logo() {
  return (
    <a href="#home" className="flex flex-col items-center pb-1 text-[#d4d4d4]">
      <svg viewBox="0 0 145 120" className="-mb-1 h-10 w-12" fill="none" stroke="currentColor" strokeWidth="6">
        <path d="M105 31H100Q103 19 92 20Q82 24 78 20Q70 20 70 12Q66 4 61 4Q56 4 52 12Q51 20 44 20Q36 24 30 20Q18 19 20 32Q24 40 18 46Q16 52 8 52Q4 56 4 60Q4 64 8 68Q16 69 18 74Q24 80 20 88Q18 101 30 100Q36 96 44 100Q51 100 52 108Q56 116 61 116Q66 116 70 108Q70 100 78 100Q82 96 92 100Q103 101 100 89H105" />
        <path d="M98 45H91A33 33 0 1 0 91 75H98" strokeWidth="5" />
        <path d="M76 48A19 19 0 1 0 76 72" strokeWidth="5" />
        <path d="M66 60H128" strokeWidth="8" stroke="#a8a8a8" />
        <g fill="#ffffff" stroke="none">
          <circle cx="61" cy="60" r="5" />
          <circle cx="117" cy="30" r="5" />
          <circle cx="103" cy="45" r="5" />
          <circle cx="135" cy="60" r="5" />
          <circle cx="103" cy="75" r="5" />
          <circle cx="117" cy="90" r="5" />
        </g>
      </svg>
      <span className="font-['Open_Sans'] text-[24px] leading-6">Inno ICT Solutions</span>
    </a>
  );
}

const NAV = ["Home", "About Us", "Contact Us", "Services"];

function WhatsAppIcon() {
  return (
    <svg viewBox="0 0 26 26" className="size-[26px]">
      <path d="M13 1a12 12 0 1 1-5.6 22.6L1 25l1.6-6A12 12 0 0 1 13 1Z" fill="#fff" stroke="#b9c4bb" strokeWidth="1" />
      <path d="M13 3a10 10 0 1 1-5 18.7L3.5 23l1.2-4.5A10 10 0 0 1 13 3Z" fill="#3fbf55" />
      <path
        transform="translate(6.5 6.5) scale(.54)"
        d="M22 16.92v3a2 2 0 0 1-2.18 2 19.79 19.79 0 0 1-8.63-3.07 19.5 19.5 0 0 1-6-6 19.79 19.79 0 0 1-3.07-8.67A2 2 0 0 1 4.11 2h3a2 2 0 0 1 2 1.72 12.84 12.84 0 0 0 .7 2.81 2 2 0 0 1-.45 2.11L8.09 9.91a16 16 0 0 0 6 6l1.27-1.27a2 2 0 0 1 2.11-.45 12.84 12.84 0 0 0 2.81.7A2 2 0 0 1 22 16.92z"
        fill="#fff"
      />
    </svg>
  );
}

const GOOGLE: [string, string][] = [
  ["G", "text-[#4285f4]"],
  ["o", "text-[#ea4335]"],
  ["o", "text-[#fbbc05]"],
  ["g", "text-[#4285f4]"],
  ["l", "text-[#34a853]"],
  ["e", "text-[#ea4335]"],
];

export default function App() {
  return (
    <div className="bg-white font-['Lato',sans-serif]">
      <header className="pt-[57px]">
        <div className="flex items-center justify-between border-t-6 border-[#0d9c9f] bg-[#333333] pt-[35px] pb-[34px] pr-[50px] pl-16">
          <Logo />
          <nav className="flex gap-[59px] text-[17px] leading-6 tracking-[3px] text-[#a6a6a6] uppercase">
            {NAV.map((item) => (
              <a key={item} href={`#${item}`} className="relative">
                {item === "Contact Us" && <span className="absolute top-[10px] -left-[17px] h-px w-2 bg-[#a6a6a6]" />}
                {item}
              </a>
            ))}
          </nav>
        </div>
      </header>

      <main>
        <section className="relative flex flex-col items-center bg-[#595959] px-6 pt-[71px] pb-[68px] text-center text-[23px] leading-8 text-white">
          <h1 className="text-[30px] leading-10 font-light tracking-[3px] uppercase">Contact Us</h1>
          <h2 className="mt-[49px] text-[24px] leading-8 font-bold">Better yet, see us in person!</h2>
          <p className="mt-7">We love our customers, so feel free to visit during normal business hours.</p>
          <a
            href="#whatsapp"
            className="mt-[52px] flex h-[70px] items-center gap-3 bg-white px-8 pr-10 font-['Liberation_Sans'] text-[20px] font-bold text-black"
          >
            <WhatsAppIcon />
            Message us on WhatsApp
          </a>
          <h2 className="mt-12 text-[24px] leading-8 font-bold">Inno ICT Solutions</h2>
          <p className="mt-7">28 King Edward Road, Willows, Bloemfontein, South Africa</p>
          <h2 className="mt-[50px] text-[24px] leading-8 font-bold">Hours</h2>
          <button type="button" className="mt-[30px] flex items-center gap-2">
            <span>Open today</span>
            <span>09:00 – 17:00</span>
            <svg viewBox="0 0 20 20" className="size-5" fill="none" stroke="currentColor" strokeWidth="1.5">
              <path d="M3 8l7 6 7-6" />
            </svg>
          </button>
          <button
            type="button"
            aria-label="Open chat"
            className="absolute right-[31px] bottom-[30px] flex size-20 items-center justify-center rounded-full bg-[#5a5a5a] shadow-[0_3px_18px_rgba(0,0,0,0.3)]"
          >
            <svg viewBox="0 0 38 32" className="h-8 w-[38px]" fill="#ffffff">
              <path d="M3 1H35Q37 1 37 3V23Q37 25 35 25H23L14 31Q12 32 12 30V25H3Q1 25 1 23V3Q1 1 3 1Z" />
            </svg>
          </button>
        </section>

        <div className="h-20 bg-black" />

        <section className="relative h-[515px] overflow-hidden">
          <MapDrawing />
          <button
            type="button"
            aria-label="Zoom out"
            className="absolute top-0 left-[13px] flex h-[52px] w-[50px] items-center justify-center rounded-b-sm bg-white shadow"
          >
            <span className="h-[5px] w-[22px] bg-[#666666]" />
          </button>
          <a href="#google" className="absolute bottom-[2px] left-3 font-['Lato'] text-[23px] leading-8 font-medium">
            {GOOGLE.map(([c, cls], i) => (
              <span key={i} className={cls}>{c}</span>
            ))}
          </a>
          <div className="absolute right-0 bottom-0 flex gap-[18px] bg-[#f5f5f5]/75 pr-2 pl-2 font-['Roboto'] text-[12px] leading-4 text-[#202020]">
            <button type="button">Keyboard shortcuts</button>
            <span>Map data ©2024 AfriGIS (Pty) Ltd</span>
            <a href="#terms">Terms</a>
            <a href="#report">Report a map error</a>
          </div>
        </section>

        <section className="flex flex-col items-center px-6 pt-[70px] pb-[85px]">
          <h2 className="text-[30px] leading-10 font-light tracking-[3px] text-[#4a4a4a] uppercase">Connect With Us</h2>
          <div className="mt-14 flex gap-[70px] text-white">
            <a href="#discord" aria-label="Discord" className="flex size-[50px] items-center justify-center rounded-full bg-[#5865f2]">
              <FaDiscord size={30} />
            </a>
            <a href="#facebook" aria-label="Facebook" className="flex size-[50px] items-center justify-center text-[#1877f2]">
              <FaFacebook size={52} className="shrink-0" />
            </a>
            <a href="#instagram" aria-label="Instagram" className="flex size-[50px] items-center justify-center rounded-full bg-[#e1306c]">
              <svg viewBox="0 0 30 30" className="size-[30px]" fill="none" stroke="currentColor" strokeWidth="2.5">
                <rect x="1.5" y="1.5" width="27" height="27" rx="7" />
                <circle cx="15" cy="15" r="6.5" />
                <circle cx="23" cy="7" r="1.8" fill="currentColor" stroke="none" />
              </svg>
            </a>
            <a href="#linkedin" aria-label="LinkedIn" className="flex size-[50px] items-center justify-center rounded-full bg-[#2867b2]">
              <FaLinkedin size={34} />
            </a>
          </div>
        </section>
      </main>

      <footer className="border-t border-[#8a8a8a] bg-[#333333] px-6 pt-[42px] pb-8 text-center text-[17px] leading-6 tracking-[3px] text-[#a0a0a0] uppercase">
        Copyright © 2024 Inno ICT Solutions - All Rights Reserved.
      </footer>
    </div>
  );
}
